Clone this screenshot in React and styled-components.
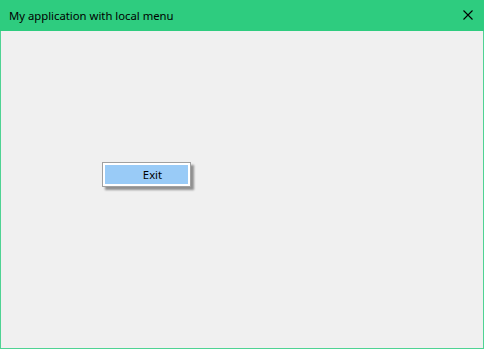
import React from 'react'
import styled, { createGlobalStyle } from 'styled-components'

const Global = createGlobalStyle`
html, body {
      margin: 0;
      padding: 0;
      background: #f0f0f0;
}
body {
      font-family: "Noto Sans", "Open Sans", sans-serif;
}
`

const Window = styled.div`
width: 484px;
height: 349px;
box-sizing: border-box;
border: 1px solid #4fd393;
border-top: none;
background: #f0f0f0;
display: flex;
flex-direction: column;
`

const TitleBar = styled.div`
height: 31px;
margin: 0 -1px;
background: #2ecc7f;
display: flex;
align-items: center;
justify-content: space-between;
padding: 0 10px 0 9px;
font-size: 11.3px;
color: #000;
`

const CloseButton = styled.div`
width: 10px;
height: 10px;
display: flex;
margin-right: 1px;
margin-top: -1px;
`

const Body = styled.div`
flex: 1;
padding: 131px 0 0 101px;
`

const Menu = styled.div`
width: 89px;
box-sizing: border-box;
border: 1px solid #a0a0a0;
background: #fff;
padding: 2px;
box-shadow: 3px 3px 2px rgba(0, 0, 0, 0.4);
`

const MenuItem = styled.div`
height: 19px;
padding-left: 12px;
background: ${p => (p.active ? '#99cbf7' : 'transparent')};
display: flex;
align-items: center;
justify-content: center;
font-size: 11.3px;
color: #000;
`

const App = () => {
      return (
      <>
            <Global />
            <Window>
                  <TitleBar>
                        <span>My application with local menu</span>
                        <CloseButton>
                              <svg width="10" height="10" viewBox="0 0 10 10">
                                    <path d="M0.5 0.5 L9.5 9.5 M9.5 0.5 L0.5 9.5" stroke="#000" strokeWidth="1.1" />
                              </svg>
                        </CloseButton>
                  </TitleBar>
                  <Body>
                        <Menu>
                              <MenuItem active>Exit</MenuItem>
                        </Menu>
                  </Body>
            </Window>
      </>
      )
}

export default App
